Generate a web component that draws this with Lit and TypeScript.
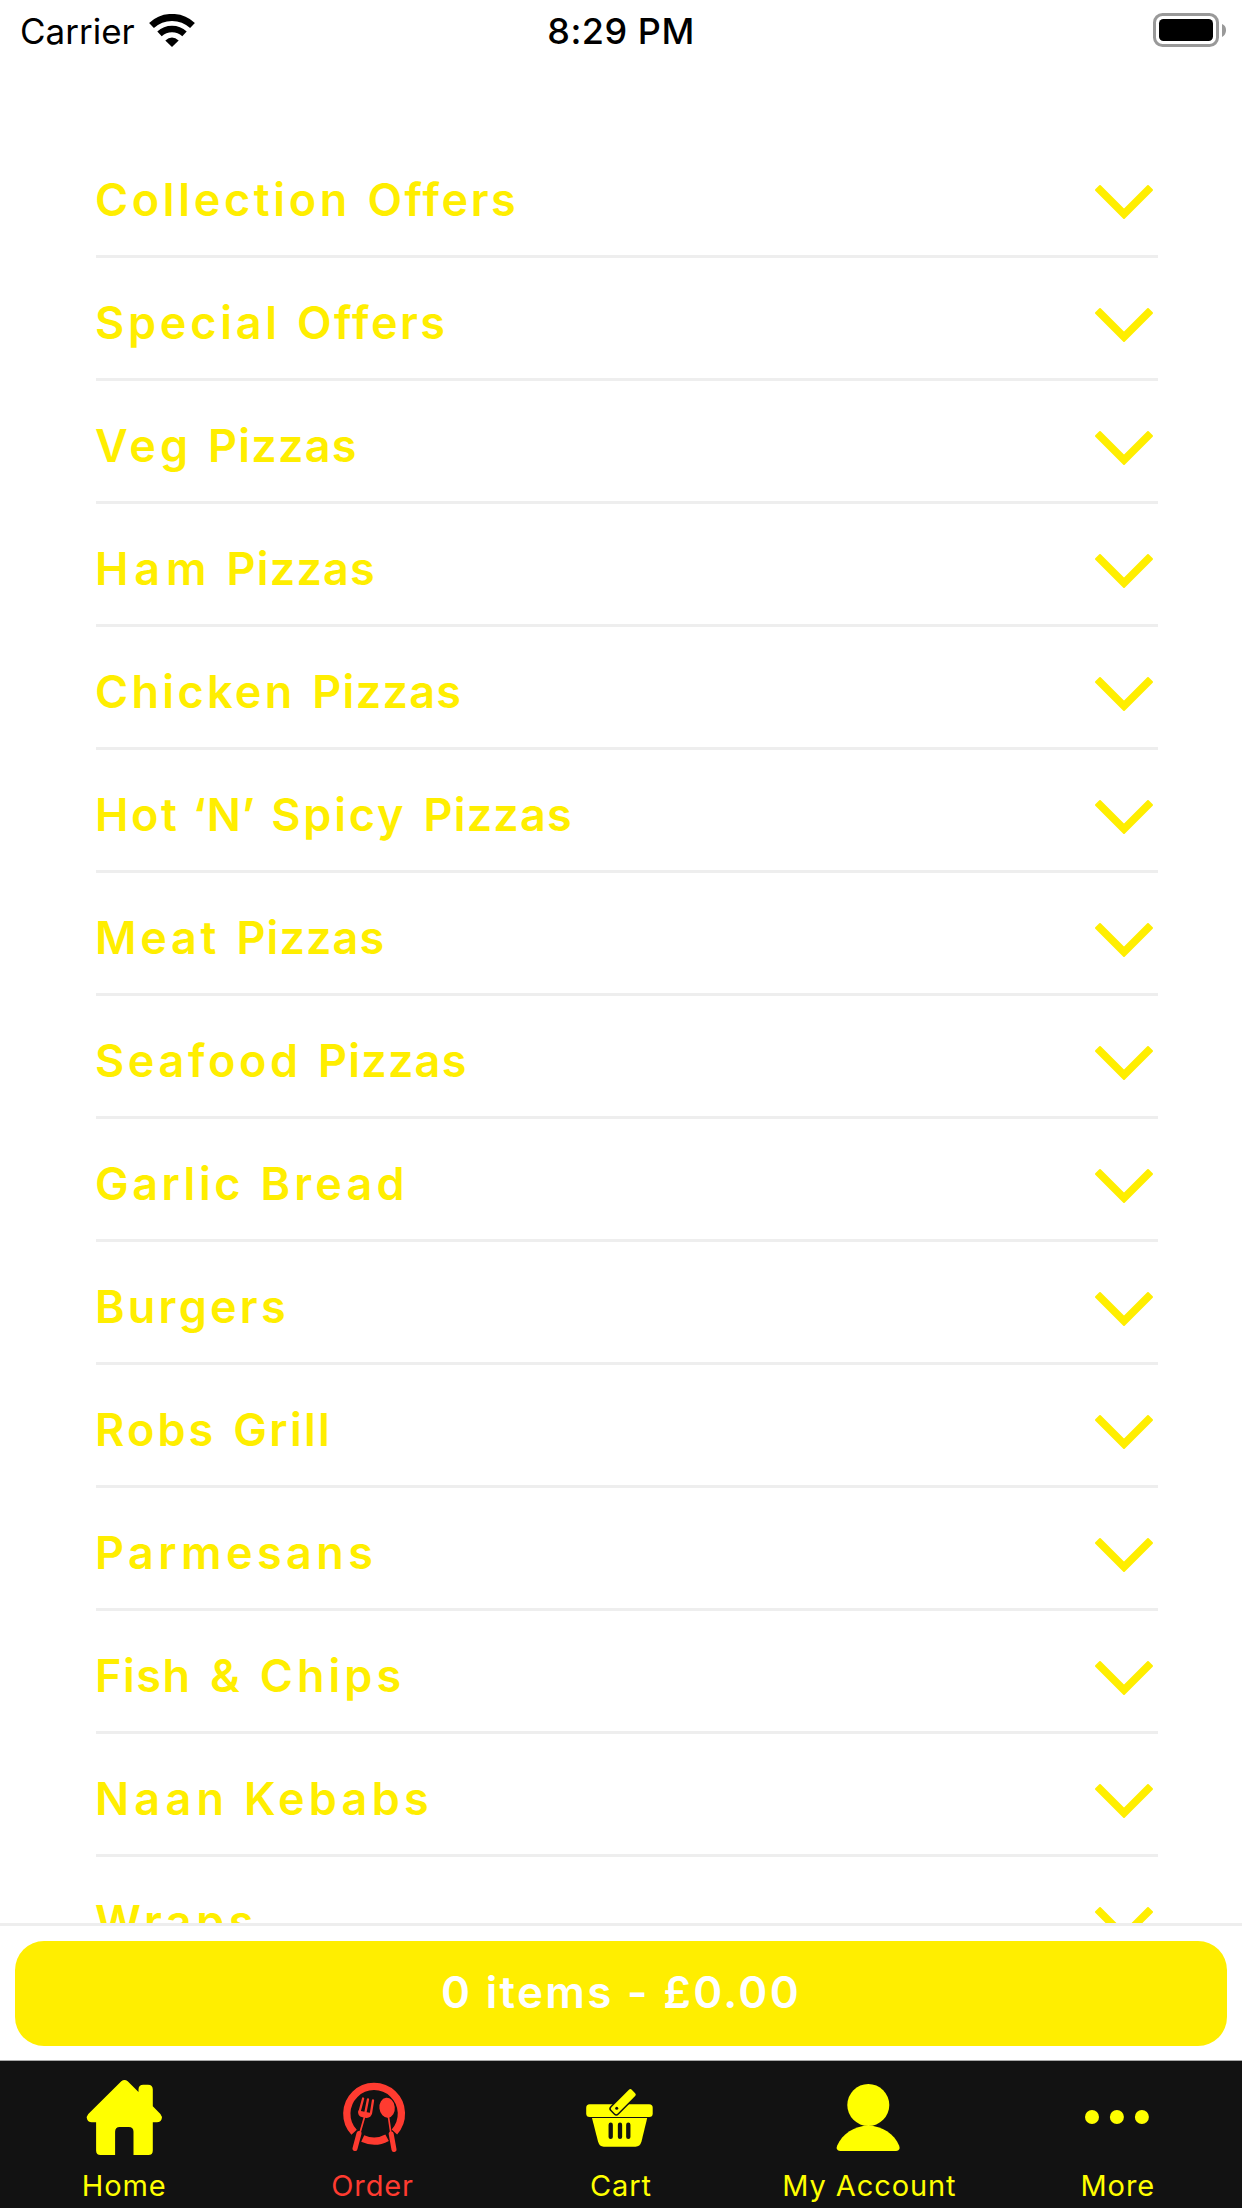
import { LitElement, html, css, svg, SVGTemplateResult } from "lit";
import { customElement } from "lit/decorators.js";

interface Tab {
  label: string;
  icon: SVGTemplateResult;
  active?: boolean;
}

// Each category is a list of words with the letter spacing of the word in px.
type Word = [text: string, tracking: number];

const categories: Word[][] = [
  [["Collection", 3.65], ["Offers", 2.5]],
  [["Special", 3.75], ["Offers", 2.4]],
  [["Veg", 4.1], ["Pizzas", 1.2]],
  [["Ham", 5.8], ["Pizzas", 1.2]],
  [["Chicken", 3.3], ["Pizzas", 1.3]],
  [["Hot", 2.5], ["‘N’", 0.6], ["Spicy", 2.8], ["Pizzas", 1.2]],
  [["Meat", 3.7], ["Pizzas", 1.1]],
  [["Seafood", 3.6], ["Pizzas", 1.2]],
  [["Garlic", 3.5], ["Bread", 4.2]],
  [["Burgers", 3.2]],
  [["Robs", 3.1], ["Grill", 2.3]],
  [["Parmesans", 4.4]],
  [["Fish", 1.5], ["&", 0], ["Chips", 4]],
  [["Naan", 5.2], ["Kebabs", 4.2]],
  [["Wraps", 4.5]],
];

// Every tab icon is drawn on a 90 x 84 canvas.
const homeIcon = svg`
  <path fill-rule="evenodd" d="M42.300 8.300Q45.500 5.800 48.700 8.300L59.500 19V16.500Q59.500 11.700 64.300 11.700H69Q73.800 11.700 73.800 16.500V33.300L81.400 41Q83.600 43.600 82.600 46.300Q81.500 49.300 78 49.300H73.800V77.500Q73.800 82 69.300 82H54.500V58.700Q54.500 54 49.800 54H40.800Q36.100 54 36.100 58.700V82H21.600Q17.100 82 17.100 77.500V49.300H12.600Q9.200 49.300 8.100 46.300Q7 43.600 9.300 41Z"/>`;

const orderIcon = svg`
  <g fill="none" stroke="currentColor" stroke-width="7.300">
    <path d="M26.100 59.300A27.300 27.300 0 1 1 66.400 59"/>
    <path d="M34.700 65.500A27.300 27.300 0 0 0 59.100 64.700"/>
  </g>
  <g fill="none" stroke="currentColor" stroke-linecap="round">
    <path d="M35.100 25.500L31.500 39M40 26.300L37.500 39M45 27.500L43 40" stroke-width="2.300"/>
    <path d="M36.500 44L31.600 61" stroke-width="1.700"/>
    <path d="M31 60.500L27 75.500" stroke-width="5"/>
    <path d="M60.500 44L63 61" stroke-width="1.700"/>
    <path d="M63.200 61L66 76.500" stroke-width="5"/>
  </g>
  <path d="M30.400 37.500L44.100 40.300Q43 45 38.500 44.900L34.500 44.300Q29 43 30.400 37.500Z"/>
  <ellipse cx="59.100" cy="34.700" rx="7.700" ry="10" transform="rotate(-6 59.100 34.700)"/>`;

const cartIcon = svg`
  <rect x="10.200" y="31.300" width="66.500" height="12.600" rx="3.500"/>
  <path d="M16 45.100H71.200L65.500 68.500Q64 73.700 59.500 73.700H27.700Q23.500 73.700 22 68.500Z"/>
  <path d="M34.700 51.700V63.900M44 51.700V63.900M52.300 51.700V63.900" stroke="#121212" stroke-width="4.300" stroke-linecap="round"/>
  <rect x="-5" y="-4.400" width="28.700" height="8.800" rx="2" transform="translate(40.700 35.200) rotate(-45)" stroke="#121212" stroke-width="3" paint-order="stroke"/>
  <circle cx="40.700" cy="35.200" r="1.500" fill="#121212"/>`;

const accountIcon = svg`
  <circle cx="44.300" cy="32" r="21"/>
  <path d="M16.200 78Q11.300 77.200 13.100 72.700C18.300 60.700 30.300 52.700 44.200 52.700S70.300 60.700 75.200 72.700Q76.800 77.200 72.200 78Z"/>`;

const moreIcon = svg`
  <circle cx="19" cy="44" r="7"/>
  <circle cx="43.900" cy="44" r="7"/>
  <circle cx="68.900" cy="44" r="7"/>`;

const tabs: Tab[] = [
  { label: "Home", icon: homeIcon },
  { label: "Order", icon: orderIcon, active: true },
  { label: "Cart", icon: cartIcon },
  { label: "My Account", icon: accountIcon },
  { label: "More", icon: moreIcon },
];

@customElement("app-root")
export class AppRoot extends LitElement {
  static styles = css`
    :host {
      display: flex;
      flex-direction: column;
      width: 1242px;
      height: 2208px;
      overflow: hidden;
      background: #fff;
      font-family: Inter, "Liberation Sans", sans-serif;
    }
    .status {
      flex: none;
      display: grid;
      grid-template-columns: 1fr auto 1fr;
      align-items: center;
      height: 62px;
      padding: 0 20px;
      color: #000;
      font-size: 36px;
      line-height: 62px;
    }
    .carrier {
      display: flex;
      align-items: center;
      gap: 14px;
      font-size: 35px;
    }
    .time {
      font-weight: 500;
      letter-spacing: 0.5px;
    }
    .battery {
      justify-self: end;
      margin-right: -5px;
    }
    svg {
      display: block;
      flex: none;
    }
    .menu {
      flex: 1;
      min-height: 0;
      overflow: hidden;
      margin: 0;
      padding: 73px 84px 0 95px;
      list-style: none;
    }
    .row {
      box-sizing: border-box;
      display: flex;
      align-items: center;
      justify-content: space-between;
      height: 123px;
      margin-left: 1px;
      padding: 10px 4px 0 0;
      border-bottom: 3px solid #eee;
      color: #ffee00;
      font-size: 45px;
      font-weight: 600;
      line-height: 60px;
      white-space: nowrap;
    }
    .name {
      display: flex;
      gap: 20px;
      margin-left: -1px;
    }
    .word {
      letter-spacing: var(--tracking);
      margin-right: calc(var(--tracking) * -1);
    }
    .quoted {
      margin-left: -4px;
      margin-right: -4px;
    }
    .chevron {
      margin-top: 4px;
    }
    .basket {
      flex: none;
      box-sizing: border-box;
      height: 137px;
      padding: 15px 15px 14px;
      border-top: 3px solid #eee;
    }
    .checkout {
      display: flex;
      align-items: center;
      justify-content: center;
      width: 100%;
      height: 105px;
      padding: 0 0 3px;
      border: 0;
      border-radius: 29px;
      background: #ffee00;
      color: #fff;
      font: inherit;
      font-size: 44px;
      font-weight: 600;
      letter-spacing: 2.3px;
    }
    .tabs {
      flex: none;
      box-sizing: border-box;
      display: grid;
      grid-template-columns: repeat(5, 1fr);
      height: 148px;
      border-top: 1px solid #a9a9a9;
      background: #121212;
    }
    .tab {
      display: flex;
      flex-direction: column;
      align-items: center;
      padding-top: 12px;
      gap: 11px;
      color: #ffff00;
      font-size: 29px;
      line-height: 36px;
      letter-spacing: 0.9px;
      white-space: nowrap;
    }
    .tab svg {
      fill: currentColor;
    }
    .active {
      color: #ff3b30;
    }
  `;

  render() {
    return html`
      <header class="status">
        <span class="carrier">
          Carrier
          <svg width="46" height="34" viewBox="0 0 46 34">
            <g fill="none" stroke="#000">
              <path d="M2.500 11.500A30 30 0 0 1 43.500 11.500" stroke-width="7" />
              <path d="M10.500 19.800A18.500 18.500 0 0 1 35.500 19.800" stroke-width="6.500" />
            </g>
            <path d="M16.300 26.500Q23 20.300 29.700 26.500L23 33Z" />
          </svg>
        </span>
        <span class="time">8:29 PM</span>
        <svg class="battery" width="74" height="36" viewBox="0 0 74 36">
          <rect x="1.500" y="1.500" width="63" height="31" rx="8" fill="none" stroke="#999" stroke-width="3" />
          <rect x="6" y="6" width="54" height="22" rx="4.500" />
          <path d="M69 11Q73 12.500 73 17.300T69 24Z" fill="#999" />
        </svg>
      </header>
      <ul class="menu">
        ${categories.map(
          (words) => html`
            <li class="row">
              <span class="name">
                ${words.map(
                  ([text, tracking]) =>
                    html`<span class="word ${text.startsWith("‘") ? "quoted" : ""}" style="--tracking:${tracking}px">${text}</span> `
                )}
              </span>
              <svg class="chevron" width="60" height="36" viewBox="0 0 60 36">
                <path
                  d="M6 2L30 26L54 2L58 6L30 34L2 6Z"
                  fill="#ffee00" stroke="#ffee00" stroke-width="2" stroke-linejoin="round"
                />
              </svg>
            </li>
          `
        )}
      </ul>
      <div class="basket">
        <button class="checkout">0 items - £0.00</button>
      </div>
      <nav class="tabs">
        ${tabs.map(
          (t) => html`
            <div class="tab ${t.active ? "active" : ""}">
              <svg width="90" height="84" viewBox="0 0 90 84">${t.icon}</svg>
              <span>${t.label}</span>
            </div>
          `
        )}
      </nav>
    `;
  }
}
